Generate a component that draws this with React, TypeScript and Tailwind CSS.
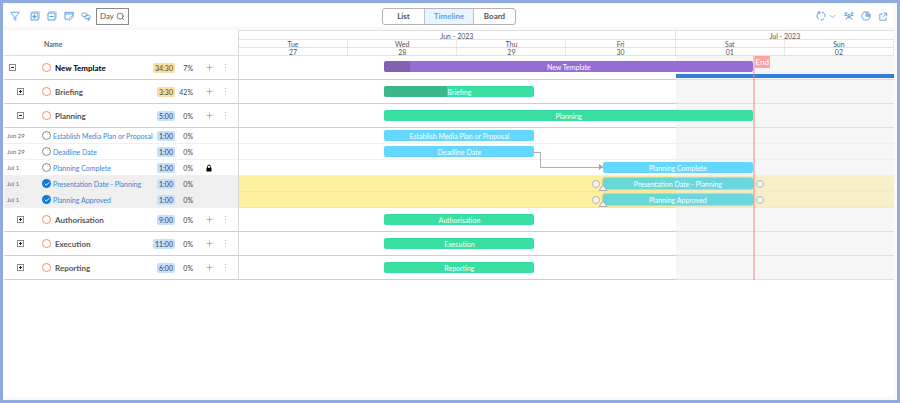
import { useState } from "react";
import clsx from "clsx";
import { Check, ChevronDown, Filter, Plus, Search } from "lucide-react";

type Row = {
  id: string;
  name: string;
  kind: "root" | "group" | "task";
  hours: string;
  percent: number;
  start: number;
  end: number;
  date?: string;
  open?: boolean;
  locked?: boolean;
  selected?: boolean;
};

// start and end are percentages of the visible date range
const ROWS: Row[] = [
  { id: "root", name: "New Template", kind: "root", hours: "34:30", percent: 7, start: 22.2, end: 78.5, open: true },
  { id: "briefing", name: "Briefing", kind: "group", hours: "3:30", percent: 42, start: 22.2, end: 45.1 },
  { id: "planning", name: "Planning", kind: "group", hours: "5:00", percent: 0, start: 22.2, end: 78.5, open: true },
  { id: "media", name: "Establish Media Plan or Proposal", kind: "task", hours: "1:00", percent: 0, start: 22.2, end: 45.1, date: "Jun 29" },
  { id: "deadline", name: "Deadline Date", kind: "task", hours: "1:00", percent: 0, start: 22.2, end: 45.1, date: "Jun 29" },
  { id: "complete", name: "Planning Complete", kind: "task", hours: "1:00", percent: 0, start: 55.5, end: 78.5, date: "Jul 1", locked: true },
  { id: "presentation", name: "Presentation Date - Planning", kind: "task", hours: "1:00", percent: 0, start: 55.5, end: 78.5, date: "Jul 1", selected: true },
  { id: "approved", name: "Planning Approved", kind: "task", hours: "1:00", percent: 0, start: 55.5, end: 78.5, date: "Jul 1", selected: true },
  { id: "authorisation", name: "Authorisation", kind: "group", hours: "9:00", percent: 0, start: 22.2, end: 45.1 },
  { id: "execution", name: "Execution", kind: "group", hours: "11:00", percent: 0, start: 22.2, end: 45.1 },
  { id: "reporting", name: "Reporting", kind: "group", hours: "6:00", percent: 0, start: 22.2, end: 45.1 },
];

const DAYS = [
  ["Tue", "27"],
  ["Wed", "28"],
  ["Thu", "29"],
  ["Fri", "30"],
  ["Sat", "01"],
  ["Sun", "02"],
];

const VIEWS = ["List", "Timeline", "Board"];

const iconButton = "flex size-[10px] items-center justify-center text-[#5b9be6] cursor-pointer";

const BoxIcon = ({ plus = false }: { plus?: boolean }) => (
  <svg viewBox="0 0 10 10" className="size-[10px]" fill="none" stroke="currentColor">
    <path d="M1.500 .8h7.700v7.200" strokeOpacity="0.55" />
    <path d="M1 2h7v7H1z" />
    <path d={plus ? "M2.500 5.500h4M4.500 3.500v4" : "M2.500 5.500h4"} strokeWidth={plus ? 1.3 : 1} />
  </svg>
);

const NoteIcon = () => (
  <svg viewBox="0 0 10 10" className="size-[10px]" fill="none" stroke="currentColor">
    <path d="M4 8.200H1V1.300h8.200v3.400M1 3h8" />
    <path d="M4.800 9.200l.4-2 3.800-2.700.4 1.200-3 3z" strokeWidth="0.8" />
  </svg>
);

const LinkIcon = () => (
  <svg viewBox="0 0 10 10" className="size-[10px]" fill="none" stroke="currentColor" strokeWidth="0.9">
    <rect x="0.8" y="2" width="5.400" height="3.600" rx="1.800" />
    <rect x="3.800" y="4.200" width="5.400" height="3.600" rx="1.800" />
    <path d="M7.500 6.600v3M6 8.100h3" />
  </svg>
);

const RefreshIcon = () => (
  <svg viewBox="0 0 10 10" className="size-[10px]" fill="none" stroke="currentColor" strokeWidth="1">
    <path d="M3.600 1.200A4 4 0 0 0 3 8.500M4.800 9A4 4 0 0 0 8.200 7.400M9 6A4 4 0 0 0 5.600 1" />
    <path d="M1.500 1h2.300v2.200" />
  </svg>
);

const PeopleIcon = () => (
  <svg viewBox="0 0 10 10" className="size-[10px]" fill="none" stroke="currentColor" strokeWidth="1">
    <circle cx="2" cy="2.400" r="0.9" />
    <circle cx="8" cy="2.400" r="0.9" />
    <circle cx="5" cy="4.400" r="1.100" />
    <path d="M.6 4.500h2.200l1 1M9.400 4.500H7.200l-1 1M1.800 8.800l1.700-2.400h3l1.700 2.400" />
  </svg>
);

const ChartIcon = () => (
  <svg viewBox="0 0 10 10" className="size-[10px]" fill="none" stroke="currentColor" strokeWidth="0.9">
    <circle cx="5" cy="5" r="4.200" />
    <path d="M5 .8V5h4.200M6.400 1.400v2.200h2.200M5 5h4" />
  </svg>
);

const ShareIcon = () => (
  <svg viewBox="0 0 10 10" className="size-[10px]" fill="none" stroke="currentColor" strokeWidth="0.9">
    <path d="M4.500 3H1.800v6.200H8V6.500M5.500 2.200h3.200v3.200M8.500 2.400L4.600 6.300" />
  </svg>
);

const LockIcon = () => (
  <svg viewBox="0 0 8 8" className="ml-[12px] size-[8px] text-black" fill="none" stroke="currentColor">
    <path d="M2.500 4V2.600a1.500 1.500 0 0 1 3 0V4" strokeWidth="0.9" />
    <path d="M1.500 3.800h5v3.700h-5z" fill="currentColor" stroke="none" />
  </svg>
);

const Toolbar = () => {
  const [view, setView] = useState("Timeline");

  return (
    <div className="flex h-[22px] items-center bg-white">
      <div className="flex flex-1 items-center gap-[7px] pl-[6px]">
        <button aria-label="Filter" className={clsx(iconButton, "mr-[3px]")}>
          <Filter size={10} strokeWidth={2.2} />
        </button>
        <button aria-label="Expand all" className={iconButton}>
          <BoxIcon plus />
        </button>
        <button aria-label="Collapse all" className={iconButton}>
          <BoxIcon />
        </button>
        <button aria-label="Edit" className={iconButton}>
          <NoteIcon />
        </button>
        <button aria-label="Link" className={iconButton}>
          <LinkIcon />
        </button>
        <button className="-ml-[2px] flex h-[17px] w-[33px] items-center justify-center gap-[2px] border border-[#8a8a8a] text-[8px] text-[#555] cursor-pointer">
          Day
          <Search size={9} strokeWidth={2} />
        </button>
      </div>

      <div className="flex h-[17px] w-[134px] overflow-hidden rounded-[3px] border border-[#b4b4b4]">
        {VIEWS.map((item) => (
          <button
            key={item}
            onClick={() => setView(item)}
            className={clsx(
              "text-[8px] font-bold cursor-pointer",
              item === view
                ? "w-[50px] border-x border-[#a9c8ea] bg-[#eaf4fe] text-[#5a9fe8]"
                : "flex-1 text-[#555]"
            )}
          >
            {item}
          </button>
        ))}
      </div>

      <div className="flex flex-1 items-center justify-end gap-[7px] pr-[6px]">
        <button aria-label="Refresh" className="flex items-center gap-[2px] text-[#5b9be6] cursor-pointer">
          <RefreshIcon />
          <ChevronDown size={9} strokeWidth={2} />
        </button>
        <button aria-label="Team" className={iconButton}>
          <PeopleIcon />
        </button>
        <button aria-label="Reports" className={iconButton}>
          <ChartIcon />
        </button>
        <button aria-label="Open in new window" className={iconButton}>
          <ShareIcon />
        </button>
      </div>
    </div>
  );
};

const StatusMark = ({ row }: { row: Row }) => {
  if (row.selected) {
    return (
      <span className="flex size-[9px] shrink-0 items-center justify-center rounded-full bg-[#0f7bdc] text-white">
        <Check size={6} strokeWidth={4} />
      </span>
    );
  }
  return (
    <span
      className={clsx(
        "size-[9px] shrink-0 rounded-full border bg-white",
        row.kind === "task" ? "border-[#8a8a8a]" : "border-[#f58a7c]"
      )}
    />
  );
};

const TaskTable = () => (
  <table className="w-[234px] shrink-0 table-fixed border-separate border-spacing-0 self-start">
    <colgroup>
      <col className="w-[38px]" />
      <col />
      <col className="w-[22px]" />
      <col className="w-[18px]" />
      <col className="w-[24px]" />
      <col className="w-[21px]" />
    </colgroup>
    <thead>
      <tr>
        <th className="h-[26px] border-b border-[#dcdcdc]" />
        <th
          colSpan={5}
          className="border-b border-[#dcdcdc] pt-[3px] pl-[2px] text-left text-[7px] leading-[10px] font-bold text-[#666]"
        >
          Name
        </th>
      </tr>
    </thead>
    <tbody>
      {ROWS.map((row) => {
        const isTask = row.kind === "task";
        const cell = clsx(
          "border-b p-0",
          isTask ? "h-4 border-[#f0f0f0]" : "h-6 border-[#cfcfcf]",
          row.selected && "bg-[#efefef]"
        );

        return (
          <tr key={row.id} className="leading-[10px]">
            <td className={cell}>
              {isTask ? (
                <span className="block pl-[3px] text-[6px] text-[#666]">{row.date}</span>
              ) : (
                <button
                  aria-label={`${row.open ? "Collapse" : "Expand"} ${row.name}`}
                  className={clsx(
                    "flex size-[7px] items-center justify-center border border-[#8a8a8a] text-[#222] cursor-pointer",
                    row.kind === "root" ? "ml-[5px]" : "ml-[13px]"
                  )}
                >
                  <svg viewBox="0 0 5 5" className="size-[5px]" stroke="currentColor">
                    <path d={row.open ? "M1 2.500h3" : "M1 2.500h3M2.500 1v3"} />
                  </svg>
                </button>
              )}
            </td>
            <td className={cell}>
              <div
                className={clsx(
                  "flex items-center whitespace-nowrap",
                  isTask ? "gap-[2px] text-[7px] text-[#3784d4]" : "gap-[4px] text-[8px] font-bold",
                  row.kind === "root" && "text-black",
                  row.kind === "group" && "text-[#555]"
                )}
              >
                <StatusMark row={row} />
                {row.name}
              </div>
            </td>
            <td className={cell}>
              <span
                className={clsx(
                  "ml-auto block w-fit rounded-[2px] px-[2px] text-[7px] text-[#444]",
                  row.percent > 0 ? "bg-[#fedd9f]" : "bg-[#c5dffc]"
                )}
              >
                {row.hours}
              </span>
            </td>
            <td className={clsx(cell, "text-right text-[7px] text-[#444]")}>{row.percent}%</td>
            <td className={cell}>
              {!isTask && (
                <button aria-label={`Add to ${row.name}`} className="ml-[12px] block text-[#7fa6dc] cursor-pointer">
                  <Plus size={9} strokeWidth={2} />
                </button>
              )}
              {row.locked && <LockIcon />}
            </td>
            <td className={cell}>
              {!isTask && (
                <button aria-label={`${row.name} menu`} className="ml-[7px] block text-[#9dbbe4] cursor-pointer">
                  <svg viewBox="0 0 3 9" className="h-[9px] w-[3px]" fill="currentColor">
                    <path d="M1 1h1v1H1zM1 4h1v1H1zM1 7h1v1H1z" />
                  </svg>
                </button>
              )}
            </td>
          </tr>
        );
      })}
    </tbody>
  </table>
);

const Handles = () => (
  <>
    <span className="absolute top-1/2 -left-[11px] size-[8px] -translate-y-1/2 rounded-full border border-[#b5b5b5] bg-[#f3f3f3]" />
    <span className="absolute top-1/2 -right-[11px] size-[8px] -translate-y-1/2 rounded-full border border-[#b5b5b5] bg-[#f3f3f3]" />
    <svg viewBox="0 0 10 6" className="absolute -bottom-[2px] -left-[5px] h-[6px] w-[10px]">
      <path d="M1 5.500L4.200 1h1.600L9 5.500z" fill="#f3f3f3" stroke="#a8a8a8" strokeWidth="0.9" />
    </svg>
  </>
);

const TimelineRow = ({ row }: { row: Row }) => (
  <div
    className={clsx(
      "relative flex border-b",
      row.kind === "task" ? "h-4" : "h-6 border-[#cfcfcf]",
      row.kind === "root" ? "items-start pt-[5px]" : "items-center",
      row.kind === "task" && !row.selected && "border-[#f0f0f0]",
      row.selected && "border-[#f5e79a] bg-[#fff0a0]"
    )}
  >
    <div
      className={clsx(
        "relative z-10 flex h-[11px] items-center justify-center rounded-[2px] text-[7px] leading-[10px] whitespace-nowrap text-white",
        row.kind === "root" && "bg-[#976cd4]",
        row.kind === "group" && "bg-[#38dfa0]",
        row.kind === "task" && !row.selected && "bg-[#63d7fe]",
        row.selected && "bg-[#50d2e0]/85 shadow-[0_0_2px_#777]"
      )}
      style={{ marginLeft: `${row.start}%`, width: `${row.end - row.start}%` }}
    >
      {row.percent > 0 && (
        <span
          className="absolute inset-y-0 left-0 rounded-l-[2px] bg-[#444]/25"
          style={{ width: `${row.percent}%` }}
        />
      )}
      <span className="relative">{row.name}</span>
      {row.selected && <Handles />}
    </div>
    {row.kind === "root" && (
      <div className="absolute right-0 bottom-[1px] left-2/3 z-10 h-[4px] bg-[#2f7ee0]" />
    )}
  </div>
);

const Timeline = () => (
  <div className="min-w-0 flex-1 self-start border-l border-[#d8d8d8] text-[#555]">
    <div className="text-center text-[7px]">
      <div className="grid h-[10px] grid-cols-3 border-y border-[#e2e2e2] leading-[10px]">
        <div className="col-span-2 border-r border-[#e2e2e2]">Jun - 2023</div>
        <div>Jul - 2023</div>
      </div>
      {[0, 1].map((line) => (
        <div key={line} className="grid h-[8px] grid-cols-6 border-b border-[#e2e2e2] leading-[9px]">
          {DAYS.map((day) => (
            <div key={day[line]} className="h-[7px] border-r border-[#e8e8e8]">
              {day[line]}
            </div>
          ))}
        </div>
      ))}
    </div>

    <div className="relative">
      {ROWS.map((row) => (
        <TimelineRow key={row.id} row={row} />
      ))}
      {/* weekend */}
      <div className="absolute inset-y-0 right-0 left-2/3 bg-[#ededed]/50" />
      {/* Deadline Date -> Planning Complete */}
      <div className="absolute top-[96px] left-[45.1%] h-[16px] w-[10.4%]">
        <div className="h-px w-[7px] bg-[#b0b0b0]" />
        <div className="ml-[6px] h-[15px] border-b border-l border-[#b0b0b0]" />
        <svg viewBox="0 0 4 6" className="absolute right-0 -bottom-[2px] h-[6px] w-[4px]" fill="#a0a0a0">
          <path d="M0 0l4 3-4 3z" />
        </svg>
      </div>
      <div className="absolute inset-y-0 left-[78.4%] z-10 border-l-2 border-[#fb8080]/50">
        <span className="block bg-[#fba3a3] px-[1px] text-[8px] leading-[12px] text-white">End</span>
      </div>
    </div>
  </div>
);

const App = () => (
  <div className="flex min-h-screen flex-col gap-[3px] border-[3px] border-[#8faadc] bg-[#faf9f8] pt-[2px] pr-[3px] pb-[3px] pl-px font-['Lato','Open_Sans',sans-serif]">
    <Toolbar />
    <div className="flex flex-1 bg-white">
      <TaskTable />
      <Timeline />
    </div>
  </div>
);

export default App;
